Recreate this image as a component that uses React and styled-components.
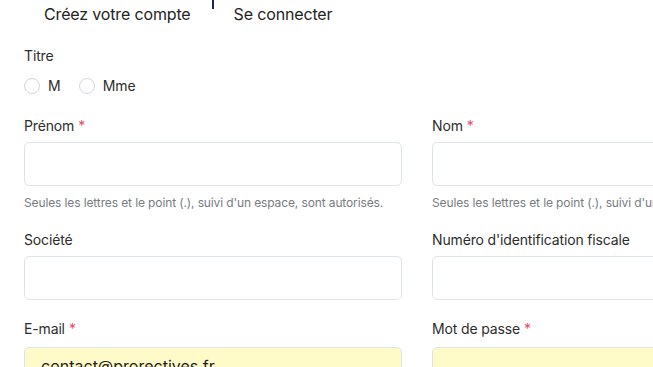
import React from "react";
import styled, { createGlobalStyle } from "styled-components";

const Global = createGlobalStyle`
  html, body { margin: 0; padding: 0; background: #fff; overflow: hidden; }
  body { font-family: "Inter", "Noto Sans", sans-serif; color: #2b2b2b; }
  * { box-sizing: border-box; }
`;

const Page = styled.div`
  width: 653px;
  height: 367px;
  overflow: hidden;
  position: relative;
`;

const Tabs = styled.div`
  display: flex;
  align-items: flex-start;
  height: 30px;
  padding-left: 44px;
`;

const Tab = styled.div`
  font-size: 16px;
  line-height: 16px;
  padding-top: 6px;
  color: #232323;
  letter-spacing: -0.15px;
`;

const Divider = styled.div`
  width: 2px;
  height: 9px;
  background: #1e2a4a;
  margin: 0 20px 0 21px;
`;

const Form = styled.div`
  width: 786px;
  padding: 18px 0 0 24px;
  display: grid;
  grid-template-columns: 378px 378px;
  column-gap: 30px;
`;

const Full = styled.div`
  grid-column: 1 / -1;
  margin-bottom: 24px;
`;

const Field = styled.div`
  margin-bottom: ${(p) => p.$mb || 0}px;
`;

const Label = styled.div`
  font-size: 14px;
  line-height: 16px;
  color: #2d2d2d;
  letter-spacing: -0.15px;
  margin-bottom: ${(p) => p.$mb || 8}px;
`;

const Star = styled.span`
  color: #e8496b;
  margin-left: 4px;
`;

const Radios = styled.div`
  display: flex;
  align-items: center;
  gap: 18px;
`;

const Radio = styled.label`
  display: flex;
  align-items: center;
  gap: 8px;
  font-size: 14px;
  color: #2d2d2d;
`;

const Circle = styled.span`
  width: 16px;
  height: 16px;
  border-radius: 50%;
  border: 1px solid #cfd6df;
  background: #fff;
`;

const Input = styled.div`
  height: 44px;
  border: 1px solid #dde3ea;
  border-radius: 5px;
  background: ${(p) => (p.$filled ? "#fefbc8" : "#fff")};
  padding: 8px 16px;
  font-size: 16px;
  line-height: 20px;
  color: #222;
`;

const Help = styled.div`
  margin-top: 10px;
  font-size: 12px;
  line-height: 14px;
  color: #777c82;
  letter-spacing: -0.12px;
  white-space: nowrap;
`;

export default function App() {
  return (
    <Page>
      <Global />
      <Tabs>
        <Tab>Créez votre compte</Tab>
        <Divider />
        <Tab>Se connecter</Tab>
      </Tabs>
      <Form>
        <Full>
          <Label $mb={13}>Titre</Label>
          <Radios>
            <Radio><Circle />M</Radio>
            <Radio><Circle />Mme</Radio>
          </Radios>
        </Full>
        <Field $mb={22}>
          <Label>Prénom<Star>*</Star></Label>
          <Input />
          <Help>Seules les lettres et le point (.), suivi d'un espace, sont autorisés.</Help>
        </Field>
        <Field $mb={22}>
          <Label>Nom<Star>*</Star></Label>
          <Input />
          <Help>Seules les lettres et le point (.), suivi d'un espace, sont autorisés.</Help>
        </Field>
        <Field $mb={21}>
          <Label>Société</Label>
          <Input />
        </Field>
        <Field $mb={21}>
          <Label>Numéro d'identification fiscale</Label>
          <Input />
        </Field>
        <Field>
          <Label $mb={10}>E-mail<Star>*</Star></Label>
          <Input $filled>contact@prorectives.fr</Input>
        </Field>
        <Field>
          <Label $mb={10}>Mot de passe<Star>*</Star></Label>
          <Input $filled />
        </Field>
      </Form>
    </Page>
  );
}
